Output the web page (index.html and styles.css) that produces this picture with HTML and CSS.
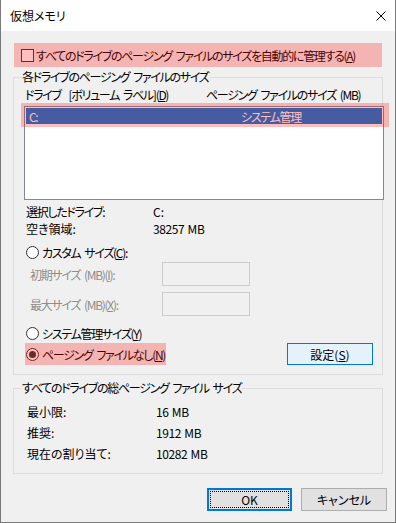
FILE: index.html
```html
<!DOCTYPE html>
<html lang="ja">
  <head>
    <meta charset="UTF-8" />
    <meta name="viewport" content="width=device-width, initial-scale=1.0" />
    <title>仮想メモリ</title>
    <link rel="stylesheet" href="styles.css">
  </head>
  <body>
    <div class="window">
      <div class="titlebar">
        <span class="title plain">仮想メモリ</span>
        <svg class="close" width="10" height="10" viewBox="0 0 10 10">
          <path d="M0.5 0.5L9.5 9.5M9.5 0.5L0.5 9.5" stroke="#000" stroke-width="1" fill="none" />
        </svg>
      </div>

      <div class="content">
        <div class="auto-row mark">
          <span class="checkbox"></span>
          <span>すべてのドライブのページング ファイルのサイズを自動的に管理する(<u>A</u>)</span>
        </div>

        <fieldset class="group group-drives">
          <legend>各ドライブのページング ファイルのサイズ</legend>

          <div class="columns">
            <span class="col-drive">ドライブ&nbsp;&nbsp;[ボリューム ラベル](<u>D</u>)</span>
            <span>ページング ファイルのサイズ (MB)</span>
          </div>

          <div class="listbox">
            <div class="list-row">
              <span class="col-drive">C:</span>
              <span>システム管理</span>
            </div>
            <div class="list-mark"></div>
          </div>

          <div class="info">
            <span>選択したドライブ:</span>
            <span class="plain">C:</span>
            <span class="plain">空き領域:</span>
            <span class="num">38257 MB</span>
          </div>

          <div class="radio-row custom">
            <span class="radio"></span>
            <span>カスタム サイズ(<u>C</u>):</span>
          </div>

          <div class="size-row first">
            <span class="size-label">初期サイズ (MB)(<u>I</u>):</span>
            <span class="size-input"></span>
          </div>
          <div class="size-row">
            <span class="size-label">最大サイズ (MB)(<u>X</u>):</span>
            <span class="size-input"></span>
          </div>

          <div class="radio-row system">
            <span class="radio"></span>
            <span>システム管理サイズ(<u>Y</u>)</span>
          </div>

          <div class="last-row">
            <div class="radio-row none mark">
              <span class="radio checked"></span>
              <span>ページング ファイルなし(<u>N</u>)</span>
            </div>
            <button class="btn btn-set plain" type="button">設定(<u>S</u>)</button>
          </div>
        </fieldset>

        <fieldset class="group group-total">
          <legend>すべてのドライブの総ページング ファイル サイズ</legend>
          <div class="totals">
            <span class="plain">最小限:</span>
            <span class="num">16 MB</span>
            <span class="plain">推奨:</span>
            <span class="num">1912 MB</span>
            <span class="plain">現在の割り当て:</span>
            <span class="num">10282 MB</span>
          </div>
        </fieldset>

        <div class="buttons">
          <button class="btn btn-ok plain" type="button">OK</button>
          <button class="btn" type="button">キャンセル</button>
        </div>
      </div>
    </div>
  </body>
</html>
```

FILE: styles.css
```css
* {
  box-sizing: border-box;
  margin: 0;
  padding: 0;
}

body {
  font-family: "Noto Sans CJK JP", "Noto Sans", sans-serif;
  font-size: 12px;
  font-feature-settings: "palt";
  letter-spacing: -1.3px;
  word-spacing: 2.5px;
  white-space: nowrap;
  color: #000;
  background: #fff;
}

/* 漢字の多いラベルは詰めない */
.plain {
  letter-spacing: 0;
  word-spacing: 0;
}

.num {
  letter-spacing: -0.4px;
  word-spacing: 1px;
}

u {
  text-underline-offset: 1px;
}

.window {
  width: 396px;
  height: 523px;
  border: 1px solid #7a7a7a;
  border-top: none;
  background: #f0f0f0;
  display: flex;
  flex-direction: column;
}

.titlebar {
  height: 31px;
  background: #fff;
  display: flex;
  align-items: center;
  justify-content: space-between;
  padding: 0 9px;
}

.content {
  padding: 12px 12px 0 12px;
  display: flex;
  flex-direction: column;
}

/* 赤い注釈の帯 */
.mark {
  position: relative;
}

.mark::after {
  content: "";
  position: absolute;
  inset: 0;
  background: rgba(255, 20, 20, 0.27);
}

.auto-row {
  height: 24px;
  width: 368px;
  margin-left: 1px;
  display: flex;
  align-items: center;
  gap: 2px;
  padding-left: 7px;
}

.checkbox {
  flex: none;
  width: 13px;
  height: 13px;
  border: 1px solid #333;
  background: #fff;
}

.group {
  border: 1px solid #dcdcdc;
  min-width: 0;
}

.group legend {
  margin-left: 7px;
  padding: 0 1px;
  line-height: 16px;
}

.group-drives {
  margin-top: 2px;
  padding-bottom: 9px;
}

.columns {
  height: 16px;
  margin-top: 1px;
  padding-left: 11px;
  display: flex;
  align-items: center;
}

.columns .col-drive {
  width: 181px;
}

.listbox {
  position: relative;
  margin: 4px 0 0 10px;
  width: 360px;
  height: 94px;
  border: 1px solid #828790;
  background: #fff;
  padding: 1px;
}

.list-row {
  height: 16px;
  background: #0078d7;
  color: #fff;
  display: flex;
  align-items: center;
  padding-left: 3px;
}

.list-row .col-drive {
  width: 212px;
}

.list-mark {
  position: absolute;
  top: -4px;
  left: -4px;
  right: -6px;
  height: 24px;
  background: rgba(255, 20, 20, 0.27);
}

.info {
  margin-top: 3px;
  padding-left: 12px;
  display: grid;
  grid-template-columns: 127px auto;
  grid-auto-rows: 17px;
  align-items: center;
}

.radio-row {
  height: 16px;
  display: flex;
  align-items: center;
  gap: 3px;
  padding-left: 12px;
}

.radio {
  flex: none;
  width: 13px;
  height: 13px;
  border: 1px solid #333;
  border-radius: 50%;
  background: #fff;
  display: flex;
  align-items: center;
  justify-content: center;
}

.radio.checked::before {
  content: "";
  width: 7px;
  height: 7px;
  border-radius: 50%;
  background: #333;
}

.radio-row.custom {
  margin-top: 7px;
}

.size-row {
  height: 24px;
  margin-top: 6px;
  padding-left: 16px;
  display: flex;
  align-items: center;
  color: #8d8d8d;
}

.size-row.first {
  margin-top: 2px;
}

.size-label {
  width: 132px;
}

.size-input {
  width: 88px;
  height: 24px;
  border: 1px solid #cccccc;
  background: #f0f0f0;
}

.radio-row.system {
  margin-top: 9px;
}

.last-row {
  margin-top: 2px;
  height: 22px;
  display: flex;
  align-items: center;
  justify-content: space-between;
  padding: 0 9px 0 11px;
}

.radio-row.none {
  height: 22px;
  width: 141px;
  padding-left: 1px;
}

.btn {
  font-family: inherit;
  font-size: 12px;
  font-feature-settings: "palt";
  color: #000;
  height: 23px;
  width: 86px;
  background: #e1e1e1;
  border: 1px solid #adadad;
}

.btn-set {
  height: 22px;
  background: #e5f1fb;
  border-color: #0078d7;
}

.group-total {
  margin-top: 5px;
  padding-bottom: 9px;
}

.totals {
  margin-top: 5px;
  padding-left: 13px;
  display: grid;
  grid-template-columns: 129px auto;
  grid-auto-rows: 21px;
  align-items: center;
}

.buttons {
  display: flex;
  justify-content: flex-end;
  gap: 9px;
  margin: 14px -4px 0 0;
}

.btn-ok {
  width: 85px;
  border: 2px solid #0078d7;
  outline: 1px dotted #000;
  outline-offset: -4px;
}
```
